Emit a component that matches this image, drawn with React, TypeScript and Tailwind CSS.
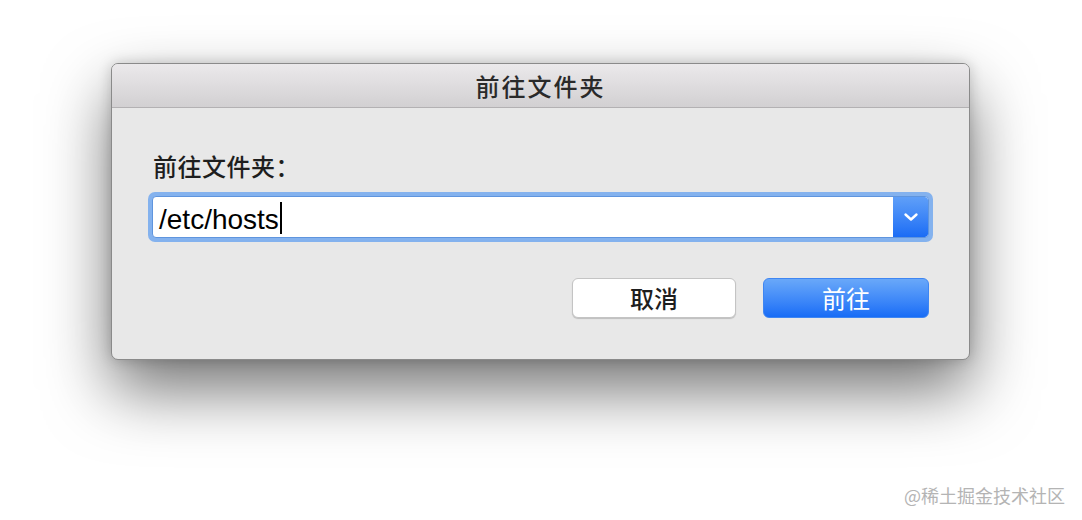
import React from "react";

export default function App() {
  const cjk = { fontFamily: '"Noto Sans CJK SC", "Noto Sans", sans-serif' };
  return (
    <div className="relative w-[1082px] h-[520px] bg-white overflow-hidden" style={cjk}>
      <div className="ml-[111px] pt-[63px]">
        <div className="w-[859px] h-[297px] rounded-[7px] border border-[#8a8a8a] bg-[#e8e8e8] shadow-[0_30px_65px_rgba(0,0,0,0.55),0_0_14px_rgba(0,0,0,0.18)] flex flex-col overflow-hidden">
          <div className="h-[44px] shrink-0 bg-gradient-to-b from-[#ebe9eb] to-[#d2d0d2] border-b border-[#b3b1b3] flex items-center justify-center">
            <span className="text-[24px] font-medium leading-none tracking-[2px] text-[#2a2a2a]">前往文件夹</span>
          </div>
          <div className="flex-1 px-[36px] pt-[44px] flex flex-col">
            <div className="ml-[5px] text-[24px] font-medium leading-[28px] tracking-[0.5px] text-[#1e1e1e]">前往文件夹：</div>
            <div className="mt-[12px] p-[4px] rounded-[7px] bg-[#84b2ee]">
              <div className="h-[42px] rounded-[4px] border border-[#5f95de] bg-white flex items-stretch overflow-hidden">
                <div className="flex-1 flex items-center pl-[6px] pt-[5px]">
                  <span
                    className="text-[28px] leading-none text-black"
                    style={{ fontFamily: '"Liberation Sans", Arial, sans-serif' }}
                  >
                    /etc/hosts
                  </span>
                  <span className="ml-[1px] -mt-[4px] w-[2px] h-[32px] bg-black" />
                </div>
                <div className="w-[35px] bg-gradient-to-b from-[#5f9ff8] to-[#1a6cf5] flex items-center justify-center rounded-r-[3px]">
                  <svg width="16" height="10" viewBox="0 0 16 10" fill="none">
                    <path d="M2.5 2.5 L8 7.5 L13.5 2.5" stroke="white" strokeWidth="2.4" strokeLinecap="round" strokeLinejoin="round" />
                  </svg>
                </div>
              </div>
            </div>
            <div className="mt-[36px] pr-[4px] flex justify-end gap-[27px]">
              <button className="w-[164px] h-[40px] rounded-[6px] bg-white border border-[#c4c4c4] shadow-[0_1px_1px_rgba(0,0,0,0.18)] text-[24px] font-medium leading-none text-[#1e1e1e] flex items-center justify-center">
                取消
              </button>
              <button className="w-[166px] h-[40px] rounded-[6px] bg-gradient-to-b from-[#69a8f9] to-[#176cf6] border border-[#3f86f2] text-[24px] leading-none text-white flex items-center justify-center">
                前往
              </button>
            </div>
          </div>
        </div>
      </div>
      <div className="absolute right-[17px] bottom-[16px] text-[18px] leading-none text-[#b4b4b4]">
        @稀土掘金技术社区
      </div>
    </div>
  );
}
